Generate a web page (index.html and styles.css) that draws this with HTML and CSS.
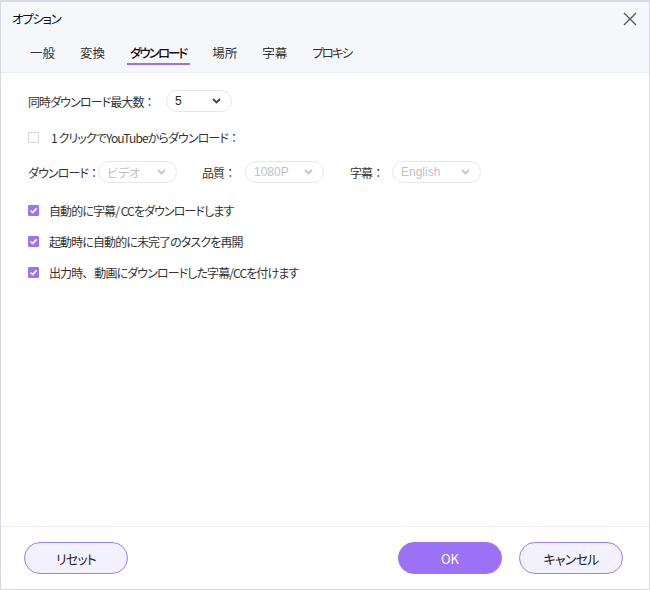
FILE: index.html
```html
<!DOCTYPE html>
<html lang="ja">
<head>
<meta charset="utf-8">
<link rel="stylesheet" href="styles.css">
</head>
<body>
<div class="window">
  <div class="header">
    <div class="titlebar">
      <span class="title">オプション</span>
      <svg class="close" width="14" height="14" viewBox="0 0 14 14"><path d="M1 1 L13 13 M13 1 L1 13" stroke="#555" stroke-width="1.3" fill="none"/></svg>
    </div>
    <div class="tabs">
      <span class="tab">一般</span>
      <span class="tab">変換</span>
      <span class="tab kana active">ダウンロード</span>
      <span class="tab">場所</span>
      <span class="tab">字幕</span>
      <span class="tab kana">プロキシ</span>
    </div>
  </div>
  <div class="content">
    <div class="row r1">
      <span class="label">同時ダウンロード最大数<span class="punct">：</span></span>
      <div class="select s-max"><span>5</span><svg class="chev" width="9" height="6" viewBox="0 0 9 6"><path d="M1 1 L4.5 4.5 L8 1" stroke="#444" stroke-width="1.8" fill="none"/></svg></div>
    </div>
    <div class="row r2">
      <span class="cb"></span>
      <span class="label">1 クリックでYouTubeからダウンロード<span class="punct">：</span></span>
    </div>
    <div class="row r3">
      <span class="label">ダウンロード<span class="punct">：</span></span>
      <div class="select dis s-a"><span>ビデオ</span><svg class="chev" width="9" height="6" viewBox="0 0 9 6"><path d="M1 1 L4.5 4.5 L8 1" stroke="#c4c4d0" stroke-width="1.8" fill="none"/></svg></div>
      <span class="label l-q">品質<span class="punct">：</span></span>
      <div class="select dis s-a"><span>1080P</span><svg class="chev" width="9" height="6" viewBox="0 0 9 6"><path d="M1 1 L4.5 4.5 L8 1" stroke="#c4c4d0" stroke-width="1.8" fill="none"/></svg></div>
      <span class="label l-s">字幕<span class="punct">：</span></span>
      <div class="select dis s-b"><span>English</span><svg class="chev" width="9" height="6" viewBox="0 0 9 6"><path d="M1 1 L4.5 4.5 L8 1" stroke="#c4c4d0" stroke-width="1.8" fill="none"/></svg></div>
    </div>
    <div class="row chk">
      <span class="cb on"><svg width="11" height="11" viewBox="0 0 11 11"><path d="M2.5 5.5 L4.6 7.6 L8.6 3.4" stroke="#fff" stroke-width="1.6" fill="none"/></svg></span>
      <span class="label">自動的に字幕/ CCをダウンロードします</span>
    </div>
    <div class="row chk">
      <span class="cb on"><svg width="11" height="11" viewBox="0 0 11 11"><path d="M2.5 5.5 L4.6 7.6 L8.6 3.4" stroke="#fff" stroke-width="1.6" fill="none"/></svg></span>
      <span class="label">起動時に自動的に未完了のタスクを再開</span>
    </div>
    <div class="row chk">
      <span class="cb on"><svg width="11" height="11" viewBox="0 0 11 11"><path d="M2.5 5.5 L4.6 7.6 L8.6 3.4" stroke="#fff" stroke-width="1.6" fill="none"/></svg></span>
      <span class="label">出力時<span class="punct">、</span>動画にダウンロードした字幕/CCを付けます</span>
    </div>
  </div>
  <div class="footer">
    <button class="btn">リセット</button>
    <div class="spacer"></div>
    <button class="btn primary">OK</button>
    <button class="btn">キャンセル</button>
  </div>
</div>
</body>
</html>
```
FILE: styles.css
```css
* { box-sizing: border-box; }
html, body { margin: 0; padding: 0; background: #fff; }
body {
  font-family: "Noto Sans CJK JP", "Noto Sans", sans-serif;
  font-size: 12px;
  color: #222;
  font-feature-settings: "palt";
}
.window {
  width: 650px;
  height: 590px;
  border: 1px solid #d8d8e2;
  border-top: 2px solid #d8d8e2;
  display: flex;
  flex-direction: column;
}
.header {
  background: #f6f7fb;
  height: 71px;
  border-bottom: 1px solid #ececf3;
  display: flex;
  flex-direction: column;
}
.titlebar {
  height: 33px;
  display: flex;
  align-items: center;
  justify-content: space-between;
  padding: 0 12px 0 11px;
}
.title { font-size: 12.5px; color: #111; letter-spacing: -1.3px; }
.tabs {
  display: flex;
  gap: 19px;
  padding-left: 26px;
  margin-top: 8px;
}
.tab {
  padding: 0 3px;
  font-size: 12.5px;
  color: #333;
  border-bottom: 2px solid transparent;
  line-height: 20px;
}
.tab.kana { letter-spacing: -2px; padding-right: 4px; }
.tab.active {
  border-bottom-color: #9a6df5;
  color: #111;
  font-weight: 500;
}
.content {
  flex: 1;
  padding: 17px 0 0 27px;
  display: flex;
  flex-direction: column;
}
.row { display: flex; align-items: center; }
.label { color: #333; white-space: nowrap; letter-spacing: -0.9px; }
.punct { font-feature-settings: normal; letter-spacing: 0; }
.r1 { height: 22px; }
.r1 .label { width: 138px; }
.r2 { margin-top: 15px; height: 20px; }
.r2 .label { margin-left: 12px; }
.r3 { margin-top: 14px; height: 22px; }
.r3 .label { width: 70px; }
.r3 .l-q { margin-left: 25px; width: 43px; }
.r3 .l-s { margin-left: 26px; width: 42px; }
.chk { margin-top: 10px; height: 21px; }
.r3 + .chk { margin-top: 17px; }
.chk .label { margin-left: 10px; }
.select {
  height: 22px;
  border: 1px solid #e6e6ef;
  border-radius: 11px;
  display: flex;
  align-items: center;
  justify-content: space-between;
  padding: 0 10px 0 8px;
  background: #fff;
  font-family: "Liberation Sans", "Noto Sans CJK JP", sans-serif;
  letter-spacing: 0;
}
.s-max { width: 66px; }
.s-a { width: 79px; }
.s-b { width: 89px; }
.select.dis { color: #c0c0cc; }
.chev { display: block; }
.cb {
  width: 11px;
  height: 11px;
  border: 1px solid #d6d6de;
  background: #fff;
  display: inline-block;
  flex: none;
}
.cb.on {
  background: #9b73f5;
  border-color: #9b73f5;
  border-radius: 1px;
  position: relative;
}
.cb.on svg { position: absolute; left: -1px; top: -1px; }
.footer {
  height: 63px;
  border-top: 1px solid #eeeef4;
  display: flex;
  align-items: center;
  padding: 0 26px 0 23px;
}
.spacer { flex: 1; }
.btn {
  width: 104px;
  height: 32px;
  border-radius: 16px;
  border: 1px solid #a07cf6;
  background: #f4f1fe;
  font-family: "Noto Sans CJK JP", sans-serif;
  font-feature-settings: "palt";
  font-size: 13px;
  letter-spacing: -0.8px;
  color: #222;
  padding: 0;
}
.btn.primary {
  background: #9b72f6;
  border-color: #9b72f6;
  color: #fff;
  letter-spacing: 0;
  margin-right: 17px;
}
```
